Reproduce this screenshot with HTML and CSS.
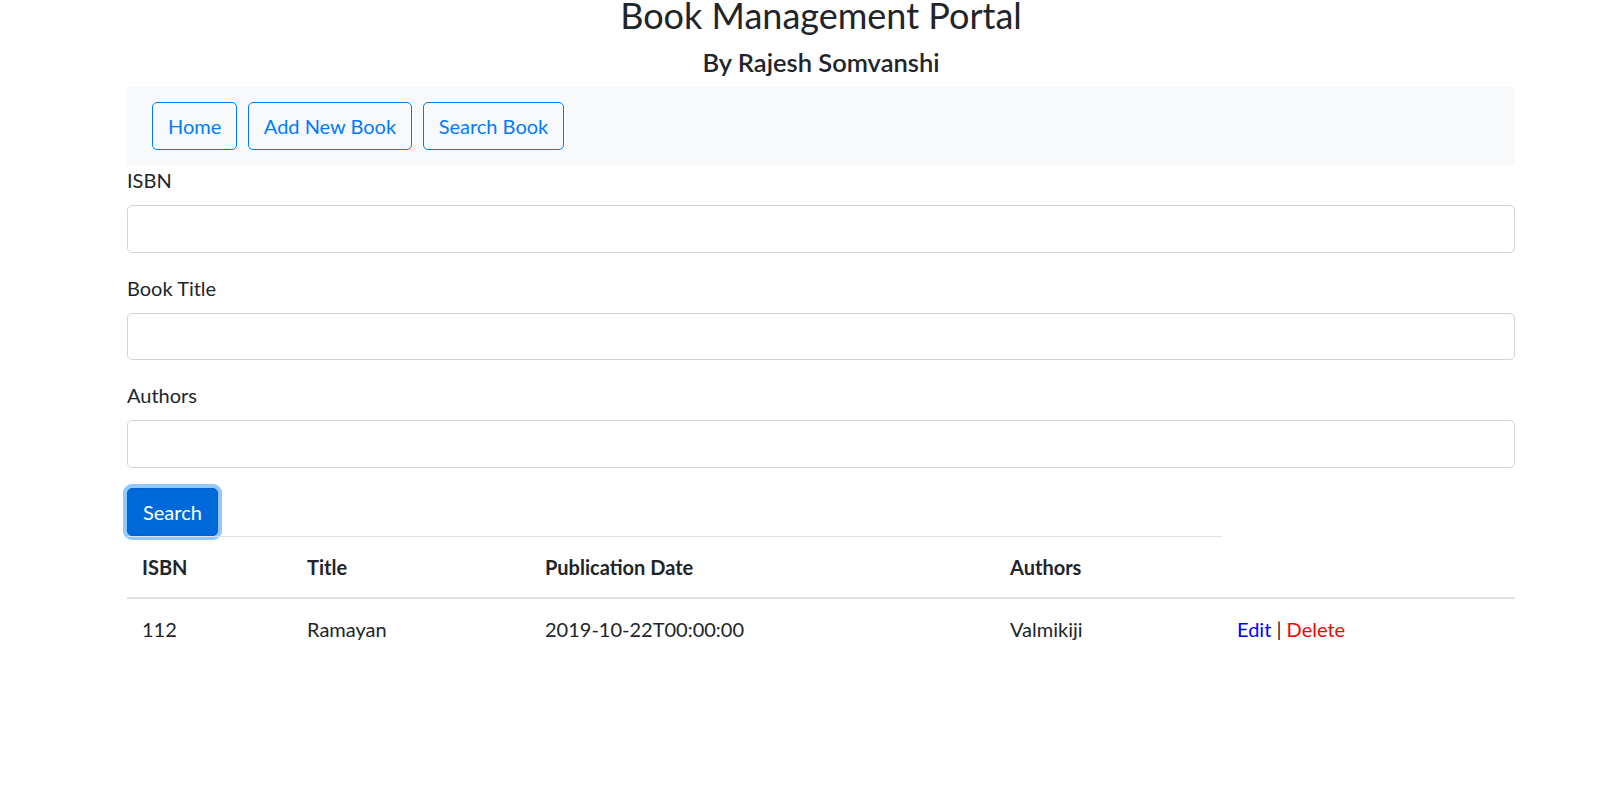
FILE: index.html
```html
<!DOCTYPE html>
<html lang="en">
<head>
<meta charset="utf-8">
<title>Book Management Portal</title>
<link rel="stylesheet" href="styles.css">
</head>
<body>
<div class="container">
  <header class="page-head">
    <h1 class="title">Book Management Portal</h1>
    <h2 class="subtitle">By Rajesh Somvanshi</h2>
  </header>
  <nav class="navbar">
    <a class="nav-btn" href="#">Home</a>
    <a class="nav-btn" href="#">Add New Book</a>
    <a class="nav-btn" href="#">Search Book</a>
  </nav>
  <form class="search-form">
    <div class="form-group">
      <label class="form-label" for="isbn">ISBN</label>
      <input class="form-control" id="isbn" type="text">
    </div>
    <div class="form-group">
      <label class="form-label" for="title">Book Title</label>
      <input class="form-control" id="title" type="text">
    </div>
    <div class="form-group">
      <label class="form-label" for="authors">Authors</label>
      <input class="form-control" id="authors" type="text">
    </div>
    <button class="btn-search" type="button">Search</button>
  </form>
  <table class="book-table">
    <colgroup>
      <col class="c-isbn"><col class="c-title"><col class="c-date"><col class="c-auth"><col class="c-act">
    </colgroup>
    <thead>
      <tr>
        <th>ISBN</th>
        <th>Title</th>
        <th>Publication Date</th>
        <th>Authors</th>
        <th class="blank"></th>
      </tr>
    </thead>
    <tbody>
      <tr>
        <td>112</td>
        <td>Ramayan</td>
        <td>2019-10-22T00:00:00</td>
        <td>Valmikiji</td>
        <td><a class="lnk-edit" href="#">Edit</a> | <a class="lnk-del" href="#">Delete</a></td>
      </tr>
    </tbody>
  </table>
</div>
</body>
</html>
```
FILE: styles.css
```css
* { box-sizing: border-box; }
html, body { margin: 0; padding: 0; background: #fff; }
body {
  font-family: "Lato", "Noto Sans", sans-serif;
  font-size: 20px;
  line-height: 30px;
  color: #212529;
}
.container {
  width: 1388px;
  margin-left: 127px;
}
.page-head { text-align: center; padding-top: 1px; }
.title {
  margin: 0;
  font-size: 36px;
  line-height: 28px;
  font-weight: 400;
}
.subtitle {
  margin: 18px 0 10px;
  font-size: 25.5px;
  line-height: 30px;
  font-weight: 600;
}
.navbar {
  display: flex;
  gap: 10.5px;
  height: 78px;
  padding: 15px 25px;
  background: #f8f9fa;
}
.nav-btn {
  display: inline-flex;
  align-items: center;
  height: 47.5px;
  padding: 0 15px;
  border: 1px solid #007bff;
  border-radius: 5px;
  color: #007bff;
  text-decoration: none;
}
.form-group { margin-bottom: 20px; }
.form-label { display: block; margin-bottom: 10px; }
.form-control {
  display: block;
  width: 100%;
  height: 47.5px;
  border: 1px solid #ced4da;
  border-radius: 5px;
  background: #fff;
  font: inherit;
}
.btn-search {
  display: block;
  height: 48px;
  padding: 0 15px;
  background: #0069d9;
  border: 1px solid #0062cc;
  border-radius: 5px;
  color: #fff;
  font: inherit;
  box-shadow: 0 0 0 4px rgba(38, 143, 255, 0.5);
}
.book-table {
  width: 100%;
  table-layout: fixed;
  border-collapse: collapse;
}
.c-isbn { width: 165px; }
.c-title { width: 238px; }
.c-date { width: 465px; }
.c-auth { width: 227px; }
.c-act { width: 293px; }
.book-table th, .book-table td {
  padding: 15px;
  text-align: left;
  vertical-align: top;
}
.book-table th {
  font-weight: 700;
  border-top: 1px solid #dee2e6;
  border-bottom: 2px solid #dee2e6;
}
.book-table th.blank { border-top: none; }
.lnk-edit { color: #0000ff; text-decoration: none; }
.lnk-del { color: #ff0000; text-decoration: none; }
```
